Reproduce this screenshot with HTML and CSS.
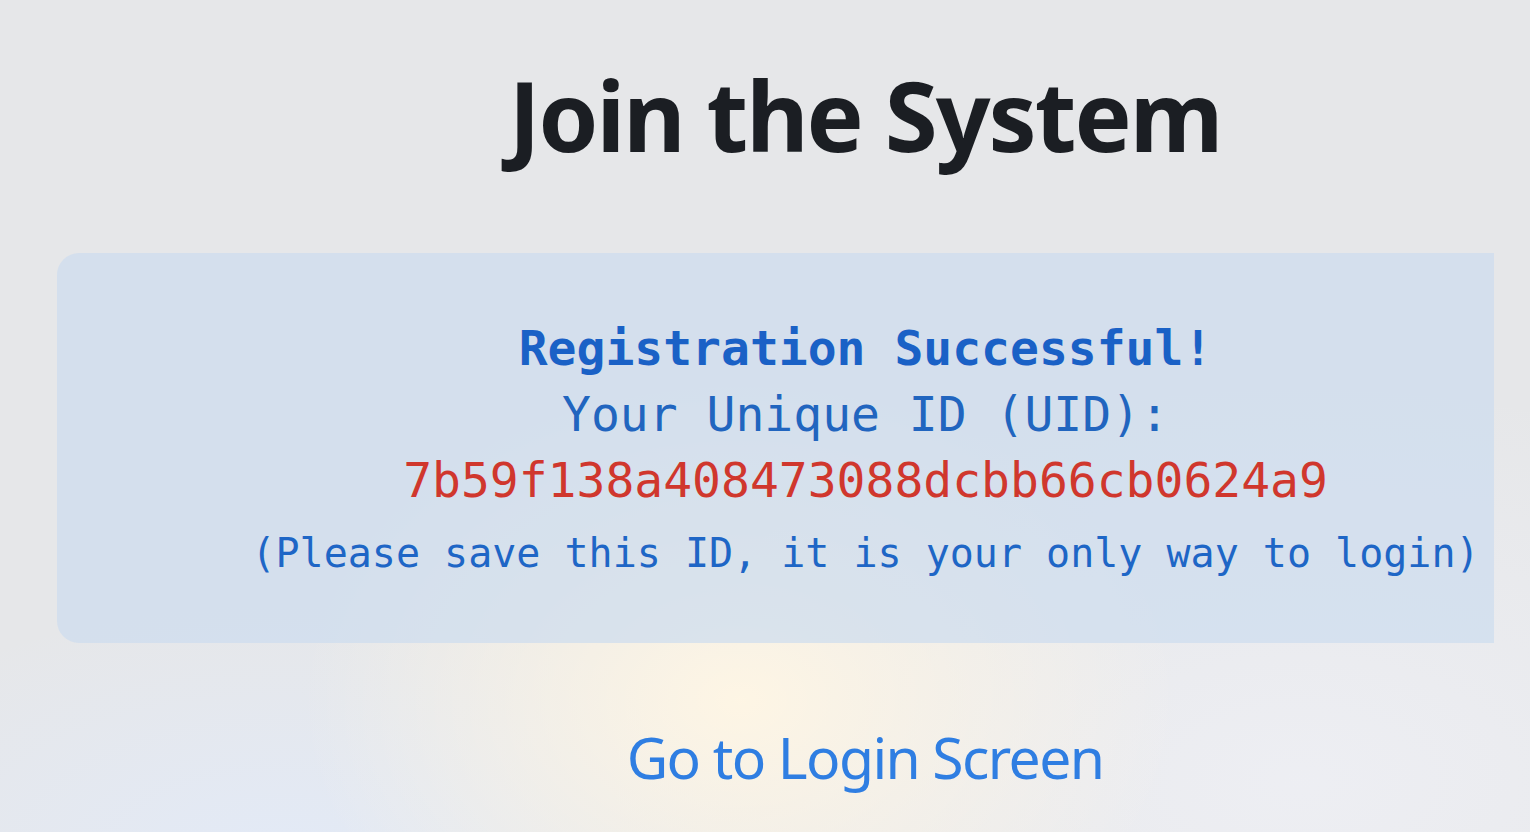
FILE: index.html
```html
<!DOCTYPE html>
<html lang="en">
<head>
    <meta charset="UTF-8">
    <title>Join the System</title>
    <link rel="stylesheet" href="styles.css">
</head>
<body>
    <div class="page">
        <h1 class="title">Join the System</h1>
        <div class="result">
            <div class="result-inner">
                <div class="result-head">Registration Successful!</div>
                <div class="result-label">Your Unique ID (UID):</div>
                <div class="result-uid">7b59f138a408473088dcbb66cb0624a9</div>
                <div class="result-note">(Please save this ID, it is your only way to login)</div>
            </div>
        </div>
        <a class="login-link" href="#">Go to Login Screen</a>
    </div>
</body>
</html>
```

FILE: styles.css
```css
* {
    margin: 0;
    padding: 0;
    box-sizing: border-box;
}

html, body {
    height: 100%;
}

body {
    font-family: "Noto Sans", "Open Sans", sans-serif;
    background-color: #e6e7e9;
    background-image:
        radial-gradient(ellipse 440px 320px at 740px 700px, rgba(255, 246, 228, 0.95), rgba(255, 246, 228, 0) 100%),
        radial-gradient(ellipse 500px 260px at 280px 860px, rgba(226, 234, 248, 0.9), rgba(226, 234, 248, 0) 100%),
        radial-gradient(ellipse 700px 400px at 1300px 780px, rgba(238, 239, 244, 0.9), rgba(238, 239, 244, 0) 100%);
    overflow: hidden;
}

.page {
    padding-left: 57px;
    display: flex;
    flex-direction: column;
}

.title {
    padding: 67px 0 0 143px;
    text-align: center;
    font-size: 96px;
    font-weight: 700;
    color: #1b1e23;
    line-height: 1;
    letter-spacing: -2px;
}

.result {
    width: 1437px;
    margin-top: 90px;
    border-radius: 22px 0 0 22px;
    background-color: rgba(205, 220, 238, 0.72);
    padding: 62px 0 50px 180px;
}

.result-inner {
    text-align: center;
    font-family: "DejaVu Sans Mono", "Liberation Mono", monospace;
}

.result-head {
    font-size: 48px;
    font-weight: 700;
    color: #1a61c6;
    line-height: 66px;
}

.result-label {
    font-size: 48px;
    color: #2165bf;
    line-height: 66px;
}

.result-uid {
    font-size: 48px;
    color: #d0372d;
    line-height: 66px;
}

.result-note {
    font-size: 40px;
    color: #1e66c6;
    line-height: 80px;
}

.login-link {
    padding-left: 143px;
    text-align: center;
    margin-top: 80px;
    font-size: 57px;
    color: #2f7ee2;
    text-decoration: none;
    line-height: 1.2;
    letter-spacing: -1.6px;
}
```
